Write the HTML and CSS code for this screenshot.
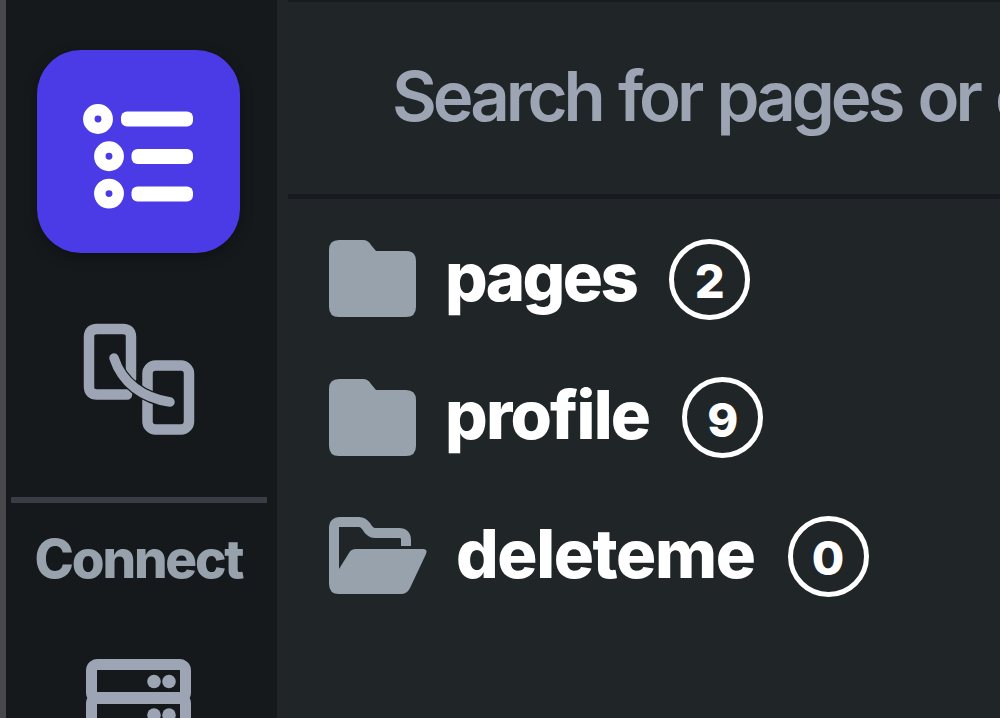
FILE: index.html
```
<!DOCTYPE html>
<html lang="en">
<head>
  <meta charset="UTF-8" />
  <meta name="viewport" content="width=device-width, initial-scale=1.0"/>
  <title>Pages</title>
  <link rel="stylesheet" href="styles.css">
</head>
<body>

  <nav class="sidebar">
    <button class="nav-button active" aria-label="Pages">
      <svg width="112" height="116" viewBox="0 -8 112 116" fill="none" stroke="#fff">
        <g stroke-width="11.5">
          <circle cx="15" cy="17" r="9.2"/>
          <circle cx="26" cy="54.3" r="9.2"/>
          <circle cx="26" cy="91.6" r="9.2"/>
        </g>
        <g fill="#fff" stroke="none">
          <rect x="38" y="9.5" width="72" height="15" rx="6"/>
          <rect x="48.5" y="47" width="61.5" height="15" rx="6"/>
          <rect x="48.5" y="84.5" width="61.5" height="15" rx="6"/>
        </g>
      </svg>
    </button>

    <button class="nav-button" aria-label="Flows">
      <svg width="112" height="112" viewBox="0 0 112 112" fill="none" stroke="#9da5b4" stroke-width="10.5">
        <path d="M44 71.5H14Q6 71.5 6 63.5V14Q6 6 14 6H40Q48 6 48 14V56" stroke-linecap="round"/>
        <rect x="64.5" y="42.5" width="41.5" height="64" rx="8"/>
        <path d="M31 35C39 60 60 75 87 79" stroke="#15191b" stroke-width="12"/>
        <path d="M31 35C39 60 60 75 87 79" stroke-width="9.5" stroke-linecap="round"/>
      </svg>
    </button>

    <div class="divider"></div>
    <div class="nav-title">Connect</div>

    <button class="nav-button server" aria-label="Server">
      <svg width="108" height="112" viewBox="0 0 108 112" fill="none" stroke="#9da5b4" stroke-width="11">
        <rect x="6.5" y="5.5" width="94" height="34" rx="6"/>
        <rect x="6.5" y="38.5" width="94" height="34" rx="6"/>
        <rect x="6.5" y="71.5" width="94" height="34" rx="6"/>
        <g fill="#9da5b4" stroke="none">
          <circle cx="69" cy="22.5" r="6.8"/>
          <circle cx="84" cy="22.5" r="6.8"/>
          <circle cx="69" cy="56" r="6.8"/>
          <circle cx="84" cy="56" r="6.8"/>
        </g>
      </svg>
    </button>
  </nav>

  <main class="panel">
    <div class="search">Search for pages or components</div>

    <ul class="folders">
      <li class="folder">
        <svg width="87" height="78" viewBox="0 0 87 78">
          <path fill="#98a2ad" d="M10 0H34Q39 0 42 5L47 11H77Q87 11 87 21V67Q87 77 77 77H10Q0 77 0 67V10Q0 0 10 0Z"/>
        </svg>
        <span class="name pages">pages</span>
        <span class="count">2</span>
      </li>
      <li class="folder">
        <svg width="87" height="78" viewBox="0 0 87 78">
          <path fill="#98a2ad" d="M10 0H34Q39 0 42 5L47 11H77Q87 11 87 21V67Q87 77 77 77H10Q0 77 0 67V10Q0 0 10 0Z"/>
        </svg>
        <span class="name profile">profile</span>
        <span class="count">9</span>
      </li>
      <li class="folder">
        <svg width="98" height="78" viewBox="0 1 98 78">
          <path fill="none" stroke="#98a2ad" stroke-width="10" d="M5 66V12Q5 6 11 6H30Q34 6 37 10Q41 17 46 17H70Q77 17 77 24V30"/>
          <path fill="#98a2ad" d="M0 50L10 53L20 37Q22 33 27 33H94Q99 33 97 38L81 72Q78 78 72 78H10Q0 78 0 68Z"/>
        </svg>
        <span class="name deleteme">deleteme</span>
        <span class="count">0</span>
      </li>
    </ul>
  </main>

</body>
</html>
```
FILE: styles.css
```
* {
  box-sizing: border-box;
}

body {
  margin: 0;
  display: flex;
  width: 100vw;
  height: 718px;
  overflow: hidden;
  background: #202528;
  font-family: Inter, "Open Sans", sans-serif;
}

.sidebar {
  flex: 0 0 277px;
  height: 718px;
  overflow: hidden;
  display: flex;
  flex-direction: column;
  align-items: center;
  padding: 50px 6px 0 0;
  border-left: 6px solid #48474b;
  background: #15191b;
}

.nav-button {
  flex: none;
  display: flex;
  align-items: center;
  justify-content: center;
  width: 203px;
  height: 203px;
  margin-bottom: 24px;
  padding: 0;
  border: none;
  border-radius: 44px;
  background: none;
}

.nav-button.active {
  background: #4a3be6;
  box-shadow: 0 4px 14px rgba(0,0,0,0.3);
}

.divider {
  flex: none;
  width: 256px;
  height: 6px;
  margin-top: -7px;
  border-radius: 1px;
  background: #383d46;
}

.nav-title {
  flex: none;
  height: 64px;
  margin-top: 24px;
  line-height: 64px;
  font-size: 53px;
  font-weight: 800;
  letter-spacing: -2.2px;
  white-space: nowrap;
  color: #98a2ad;
}

.server {
  height: 112px;
  margin-top: 68px;
}

.panel {
  flex: 1;
  min-width: 0;
  padding-left: 11px;
}

.search {
  height: 199px;
  padding-left: 104px;
  border-top: 2px solid #171a1e;
  border-bottom: 5px solid #171a1e;
  line-height: 188px;
  font-size: 69px;
  font-weight: 600;
  letter-spacing: -4.1px;
  word-spacing: 3px;
  white-space: nowrap;
  overflow: hidden;
  color: #9da5b4;
}

.folders {
  margin: 0;
  padding: 11px 0 0 41px;
  list-style: none;
}

.folder {
  display: flex;
  align-items: center;
  height: 138.5px;
}

.folder svg {
  flex: none;
}

.name {
  margin-left: 29px;
  padding-bottom: 5px;
  line-height: 80px;
  font-size: 67px;
  font-weight: 800;
  color: #fff;
}

.pages {
  letter-spacing: -2.6px;
}

.profile {
  letter-spacing: -1.8px;
}

.deleteme {
  letter-spacing: -1.4px;
}

.count {
  display: flex;
  align-items: center;
  justify-content: center;
  width: 81px;
  height: 81px;
  margin-left: 33px;
  padding-top: 3px;
  border: 5px solid #fff;
  border-radius: 50%;
  font-size: 47px;
  font-weight: 800;
  color: #fff;
}
```
